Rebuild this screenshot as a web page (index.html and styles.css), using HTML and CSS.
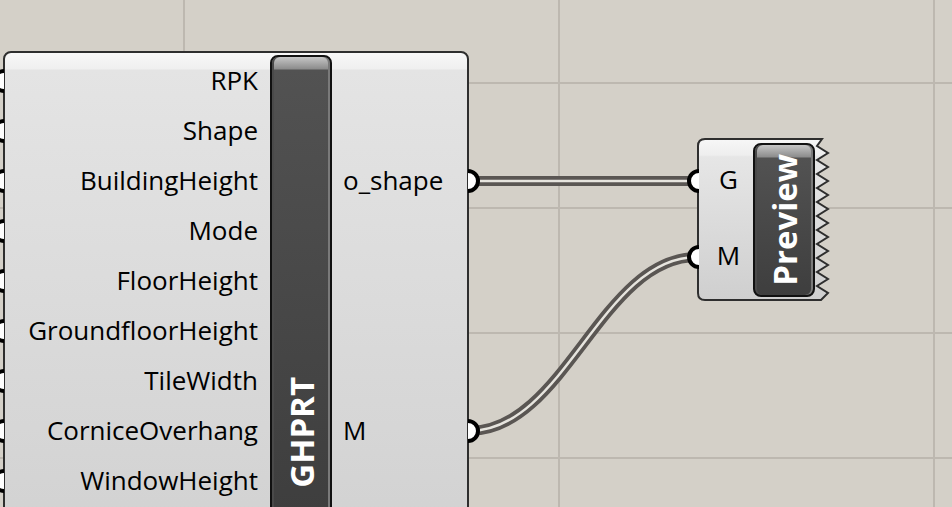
FILE: index.html
```html
<!DOCTYPE html>
<html>
<head>
<meta charset="utf-8">
<link rel="stylesheet" href="styles.css">
</head>
<body>
<div class="canvas">
  <div class="comp">
    <div class="inputs">
      <div class="lbl">RPK</div>
      <div class="lbl">Shape</div>
      <div class="lbl">BuildingHeight</div>
      <div class="lbl">Mode</div>
      <div class="lbl">FloorHeight</div>
      <div class="lbl">GroundfloorHeight</div>
      <div class="lbl">TileWidth</div>
      <div class="lbl">CorniceOverhang</div>
      <div class="lbl">WindowHeight</div>
    </div>
    <div class="bar main-bar"><span class="bar-title">GHPRT</span></div>
    <div class="outputs">
      <div class="lbl"></div>
      <div class="lbl"></div>
      <div class="lbl">o_shape</div>
      <div class="lbl"></div>
      <div class="lbl"></div>
      <div class="lbl"></div>
      <div class="lbl"></div>
      <div class="lbl">M</div>
    </div>
  </div>

  <div class="preview">
    <svg class="preview-shape" width="134" height="163" viewBox="0 0 134 163">
      <defs>
        <linearGradient id="pvfill" x1="0" y1="0" x2="0" y2="1">
          <stop offset="0" stop-color="#f7f7f7"/>
          <stop offset="0.1" stop-color="#eeeeee"/>
          <stop offset="0.11" stop-color="#e6e6e6"/>
          <stop offset="1" stop-color="#cfcfcf"/>
        </linearGradient>
      </defs>
      <path d="M 8 1 H 125 L 120 8 L 131 15 L 120 22 L 131 29 L 120 36 L 131 43 L 120 50 L 131 57 L 120 64 L 131 71 L 120 78 L 131 85 L 120 92 L 131 99 L 120 106 L 131 113 L 120 120 L 131 127 L 120 134 L 131 141 L 120 148 L 131 155 L 124 162 H 8 Q 1 162 1 155 V 8 Q 1 1 8 1 Z" fill="url(#pvfill)" stroke="#2e2e2e" stroke-width="2" stroke-linejoin="miter"/>
    </svg>
    <div class="pv-inputs">
      <div class="pv-lbl">G</div>
      <div class="pv-lbl">M</div>
    </div>
    <div class="bar pv-bar"><span class="bar-title">Preview</span></div>
  </div>

  <svg class="wires" width="952" height="507" viewBox="0 0 952 507">
    <g fill="none" stroke-linecap="butt">
      <path d="M 469 181 H 697" stroke="#5a5653" stroke-width="10"/>
      <path d="M 469 181 H 697" stroke="#e6e4de" stroke-width="2.5"/>
      <path d="M 469 431 C 565 431, 601 257, 697 257" stroke="#5a5653" stroke-width="10"/>
      <path d="M 469 431 C 565 431, 601 257, 697 257" stroke="#e6e4de" stroke-width="2.5"/>
    </g>
    <g fill="#ffffff" stroke="#000000" stroke-width="4">
      <path d="M 468 171 A 10 10 0 0 1 468 191"/>
      <path d="M 468 421 A 10 10 0 0 1 468 441"/>
      <path d="M 699 171 A 10 10 0 0 0 699 191"/>
      <path d="M 699 247 A 10 10 0 0 0 699 267"/>
      <path d="M 4 71 A 10 10 0 0 0 4 91"/>
      <path d="M 4 121 A 10 10 0 0 0 4 141"/>
      <path d="M 4 171 A 10 10 0 0 0 4 191"/>
      <path d="M 4 221 A 10 10 0 0 0 4 241"/>
      <path d="M 4 271 A 10 10 0 0 0 4 291"/>
      <path d="M 4 321 A 10 10 0 0 0 4 341"/>
      <path d="M 4 371 A 10 10 0 0 0 4 391"/>
      <path d="M 4 421 A 10 10 0 0 0 4 441"/>
      <path d="M 4 471 A 10 10 0 0 0 4 491"/>
    </g>
  </svg>
</div>
</body>
</html>
```
FILE: styles.css
```css
html, body {
  margin: 0;
  padding: 0;
}

body {
  width: 952px;
  height: 507px;
  overflow: hidden;
  background: #d4d0c8;
  font-family: "Open Sans", "Noto Sans", sans-serif;
}

.canvas {
  position: relative;
  width: 952px;
  height: 507px;
  overflow: hidden;
  background-color: #d4d0c8;
  background-image:
    repeating-linear-gradient(to bottom, transparent 0 82px, #bdb8b0 82px 84px, transparent 84px 125px),
    repeating-linear-gradient(to right, transparent 0 183px, #bdb8b0 183px 185px, transparent 185px 375px);
}

.comp {
  position: absolute;
  left: 3px;
  top: 51px;
  width: 466px;
  height: 480px;
  box-sizing: border-box;
  border: 2px solid #2e2e2e;
  border-radius: 8px;
  background: linear-gradient(to bottom, #f8f8f8 0, #efefef 16px, #e4e4e4 17px, #d2d2d2 100%);
  display: flex;
  align-items: flex-start;
  font-size: 26px;
  color: #000000;
}

.inputs {
  width: 253px;
  flex: none;
  padding-top: 2px;
  text-align: right;
}

.lbl {
  height: 50px;
  line-height: 50px;
  white-space: nowrap;
}

.bar {
  box-sizing: border-box;
  width: 62px;
  flex: none;
  border: 2px solid #111111;
  border-radius: 8px;
  background: linear-gradient(to bottom, #c6c6c6 0, #8c8c8c 12px, #525252 13px, #3e3e3e 100%);
  box-shadow: inset -2px 0 0 #7a7a7a, inset 2px 0 0 #4a4a4a;
  display: flex;
  justify-content: center;
}

.main-bar {
  margin: 2px 0 0 12px;
  height: 460px;
  align-items: flex-end;
  padding-bottom: 25px;
}

.bar-title {
  writing-mode: vertical-rl;
  transform: rotate(180deg);
  font-weight: 700;
  font-size: 33px;
  line-height: 1;
  color: #ffffff;
  white-space: nowrap;
}

.outputs {
  padding-top: 2px;
  margin-left: 11px;
}

.preview {
  position: absolute;
  left: 697px;
  top: 138px;
  width: 134px;
  height: 163px;
  display: flex;
  align-items: flex-start;
  font-size: 26px;
  color: #000000;
}

.preview-shape {
  position: absolute;
  left: 0;
  top: 0;
}

.pv-inputs {
  position: relative;
  width: 56px;
  flex: none;
  box-sizing: border-box;
  padding: 3px 0 0 7px;
  text-align: center;
}

.pv-lbl {
  height: 76px;
  line-height: 76px;
}

.pv-bar {
  position: relative;
  margin-top: 5px;
  height: 154px;
  align-items: center;
}

.wires {
  position: absolute;
  left: 0;
  top: 0;
  pointer-events: none;
}
```
